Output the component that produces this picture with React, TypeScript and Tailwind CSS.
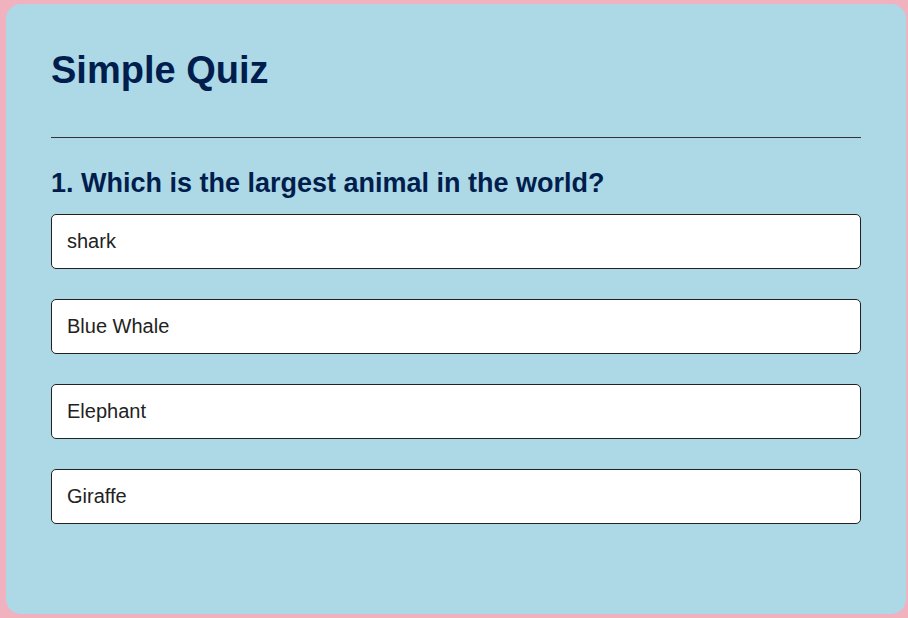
const answers = ["shark", "Blue Whale", "Elephant", "Giraffe"];

export default function App() {
  return (
    <div className="flex min-h-screen flex-col bg-[#f1b2bf] pt-1 pr-[2px] pb-1 pl-[6px] font-['Liberation_Sans',Arial,sans-serif]">
      <main className="flex-1 rounded-[15px] bg-[#add8e6] p-[45px]">
        <h1 className="border-b border-[#333333] pb-[45px] text-[38px] leading-[43px] font-bold text-[#001e4d]">
          Simple Quiz
        </h1>
        <section className="pt-[29px]">
          <h2 className="text-[27px] leading-[32px] font-bold text-[#001e4d]">
            1. Which is the largest animal in the world?
          </h2>
          <div className="mt-[15px] flex flex-col gap-[30px]">
            {answers.map((answer) => (
              <button
                key={answer}
                type="button"
                className="h-[55px] w-full rounded-[5px] border border-[#222222] bg-white px-[15px] text-left text-[20px] leading-[23px] text-[#222222]"
              >
                {answer}
              </button>
            ))}
          </div>
        </section>
      </main>
    </div>
  );
}
